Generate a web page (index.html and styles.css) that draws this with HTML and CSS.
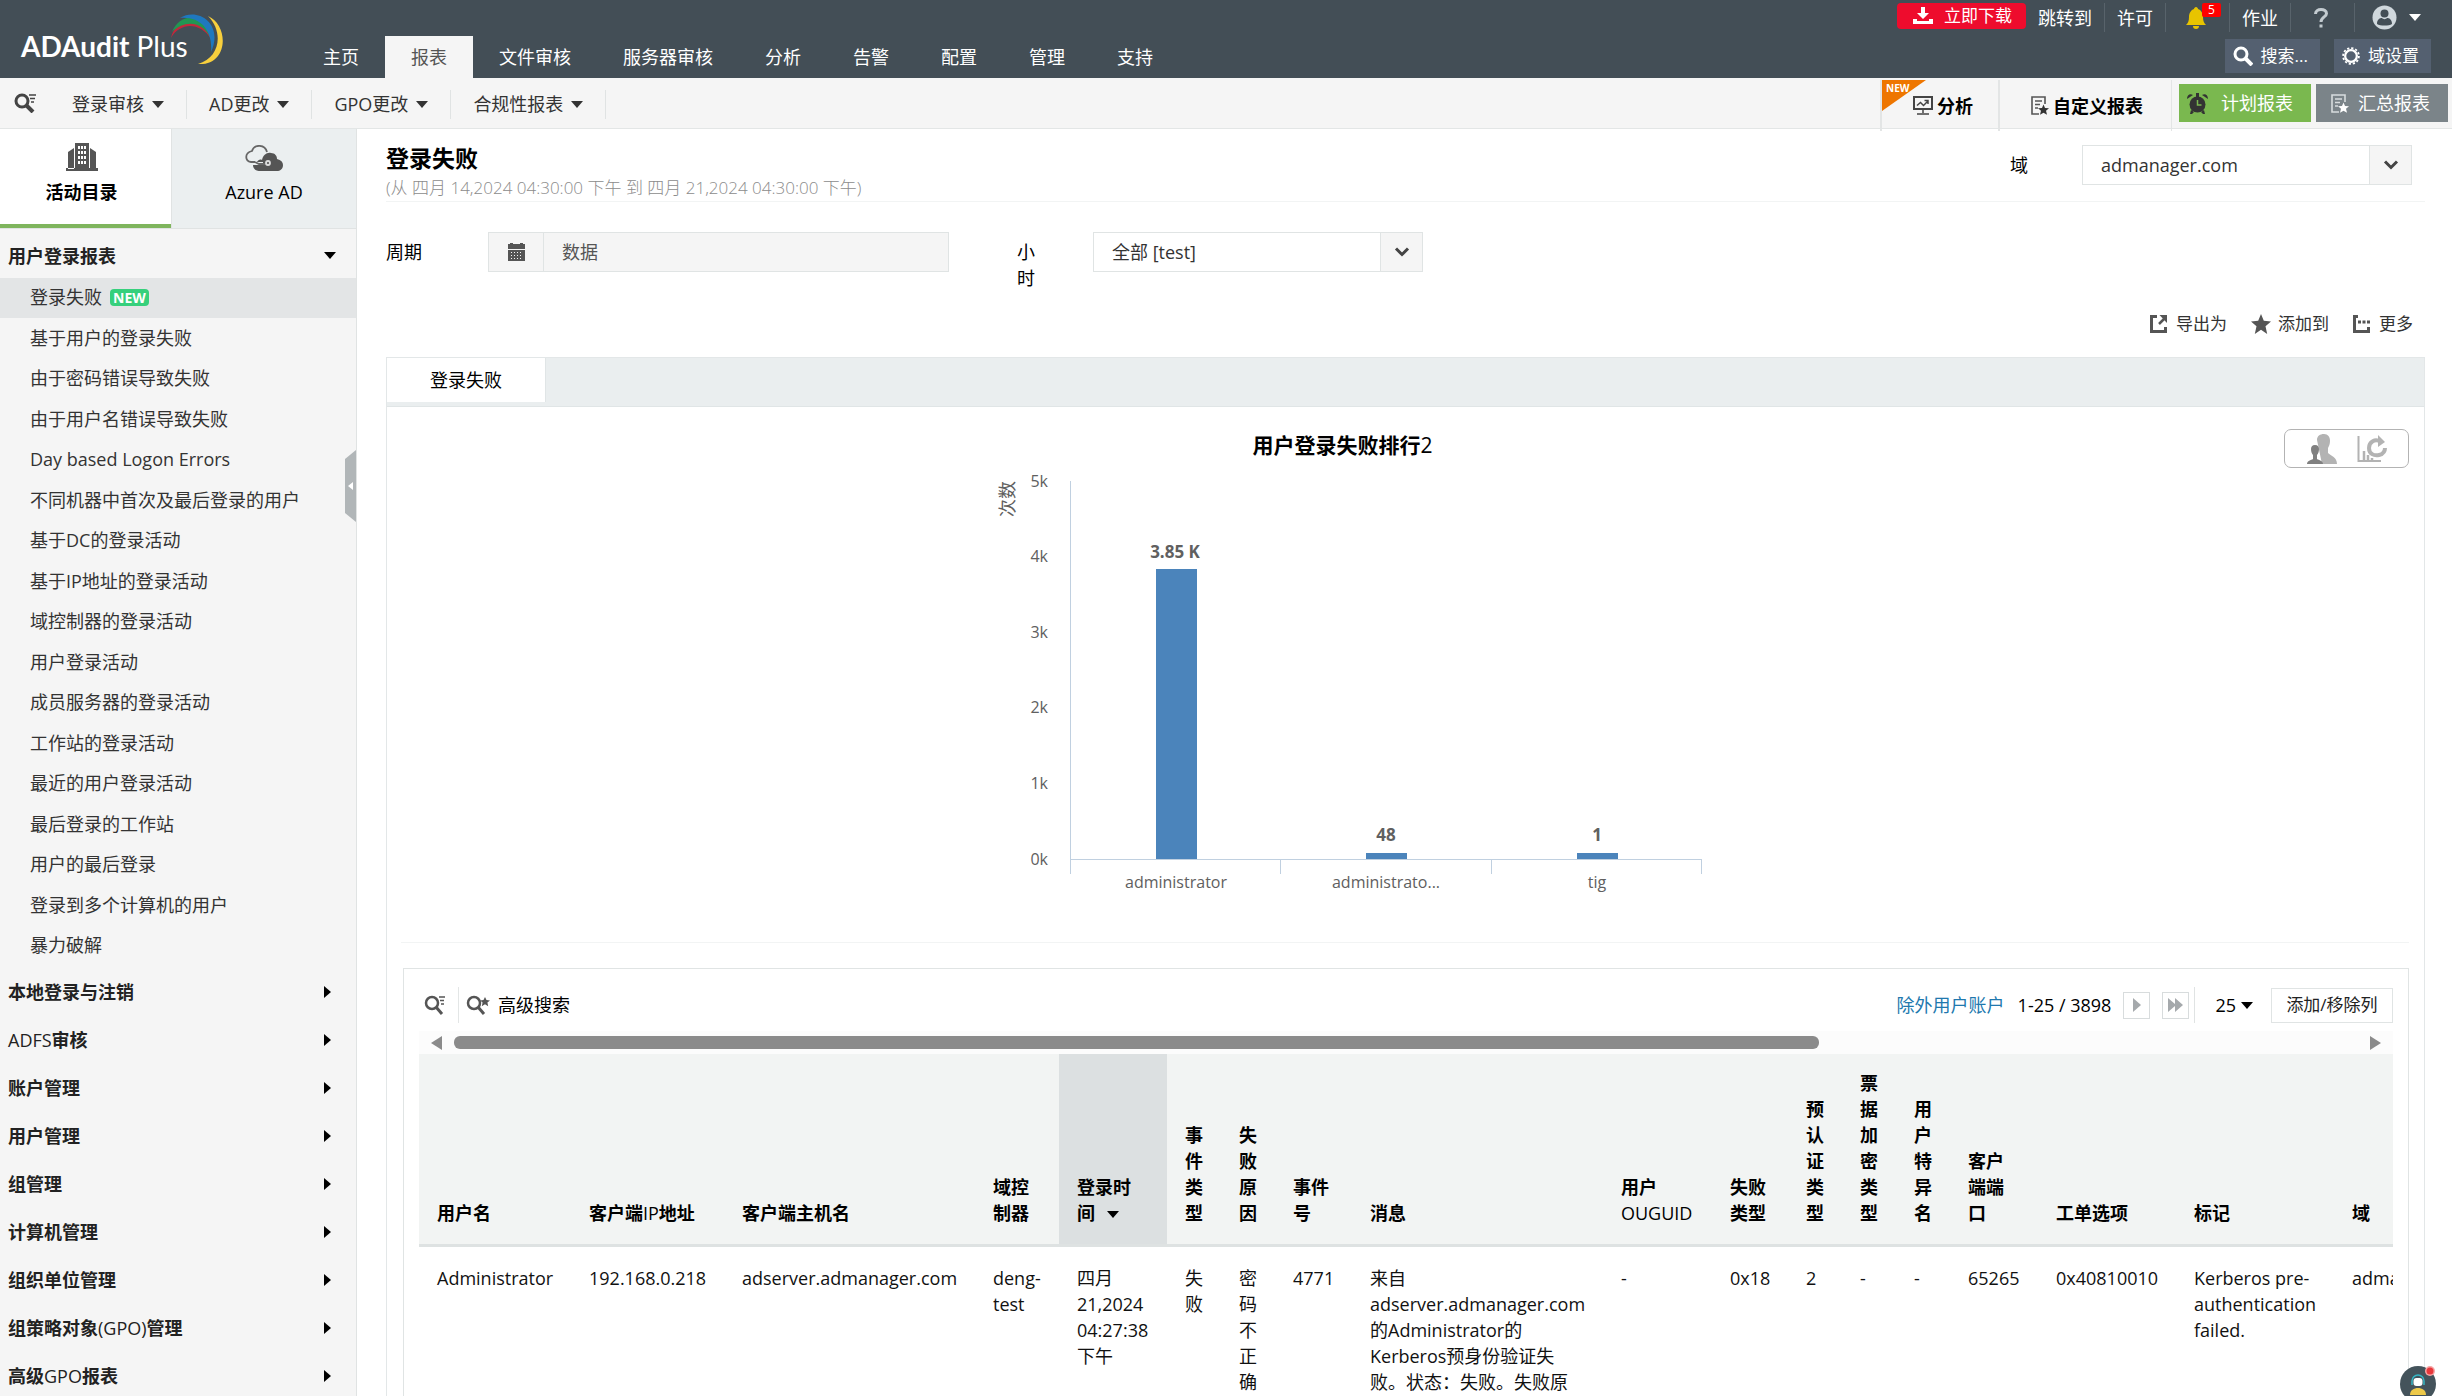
FILE: index.html
```html
<!DOCTYPE html>
<html lang="zh-CN">
<head>
<meta charset="utf-8">
<title>ADAudit Plus</title>
<link rel="stylesheet" href="styles.css">
</head>
<body>
<header class="header">
  <a class="logo" href="#"><span class="logo-text"><b>ADAudit</b> Plus</span>
    <svg class="logo-swoosh" width="56" height="54" viewBox="0 0 56 54">
      <path fill="#c0293c" d="M1 26C5 6 32 2 41 27C31 11 11 9 1 26Z"/>
      <path fill="#219653" d="M2 20C12-4 42 3 43 32C37 11 17 5 2 20Z"/>
      <path fill="#1f78bf" d="M10 6C28-5 54 12 41 40C43 18 30 4 10 6Z"/>
      <path fill="#f7cf3d" d="M38 4C60 14 58 54 28 52C50 46 54 20 38 4Z"/>
    </svg>
  </a>
  <nav class="main-nav">
    <a href="#">主页</a><a href="#" class="active">报表</a><a href="#">文件审核</a><a href="#">服务器审核</a><a href="#">分析</a><a href="#">告警</a><a href="#">配置</a><a href="#">管理</a><a href="#">支持</a>
  </nav>
  <div class="header-tools">
    <div class="tool-row top">
      <button class="download"><svg width="20" height="18" viewBox="0 0 20 18" fill="#fff"><path d="M8 0h4v6h4l-6 6-6-6h4zM0 12h4v2h12v-2h4v5H0z"/></svg>立即下载</button>
      <a href="#" class="top-item first">跳转到</a>
      <a href="#" class="top-item">许可</a>
      <a href="#" class="top-item icon-item"><svg width="20" height="22" viewBox="0 0 20 22" fill="#e8c400"><path d="M10 0c1 0 2 1 2 2 3 1 5 4 5 8 0 4 1 6 3 8H0c2-2 3-4 3-8 0-4 2-7 5-8 0-1 1-2 2-2zM7 19h6c0 2-1 3-3 3s-3-1-3-3z"/></svg><span class="badge">5</span></a>
      <a href="#" class="top-item">作业</a>
      <a href="#" class="top-item icon-item"><svg width="14" height="20" viewBox="0 0 14 20" fill="none" stroke="#c3cbd0" stroke-width="3"><path d="M1.500 6C1.500 3 4 1.500 7 1.500S12.500 3 12.500 5.500C12.500 9 7 9 7 14M7 16.500v3"/></svg></a>
      <a href="#" class="top-item user"><svg width="25" height="25" viewBox="0 0 25 25"><circle cx="12.500" cy="12.500" r="12" fill="#d0d8dd"/><circle cx="12.500" cy="8.500" r="4" fill="#434e56"/><path fill="#434e56" d="M5 19c0-5 3-6 5-6 1 1.500 4 1.500 5 0 2 0 5 1 5 6-3 2-12 2-15 0z"/></svg><span class="caret white"></span></a>
    </div>
    <div class="tool-row bottom">
      <button class="dark-btn"><svg width="20" height="20" viewBox="0 0 20 20" fill="none" stroke="#fff" stroke-width="3"><circle cx="8" cy="8" r="6"/><path d="M12 12l7 7" stroke-width="4"/></svg>搜索...</button>
      <button class="dark-btn"><svg width="18" height="18" viewBox="0 0 20 20" fill="none" stroke="#fff"><circle cx="10" cy="10" r="6.500" stroke-width="2.500"/><circle cx="10" cy="10" r="8.800" stroke-width="2" stroke-dasharray="2.500 2.100"/></svg>域设置</button>
    </div>
  </div>
</header>

<div class="subnav">
  <button class="icon-btn" aria-label="搜索"><svg width="22" height="20" viewBox="0 0 22 20" fill="none" stroke="#444"><circle cx="8" cy="8" r="6" stroke-width="3"/><path d="M12 12l7 7" stroke-width="4"/><path d="M15 2h7M16 5.500h5M17 9h3" stroke-width="1.500"/></svg></button>
  <nav class="sub-links">
    <a href="#">登录审核<span class="caret"></span></a><a href="#">AD更改<span class="caret"></span></a><a href="#">GPO更改<span class="caret"></span></a><a href="#">合规性报表<span class="caret"></span></a>
  </nav>
  <div class="sub-right">
    <a href="#" class="sub-link analysis"><svg class="ribbon" width="44" height="31" viewBox="0 0 44 31"><path d="M0 0h44L0 31z" fill="#ee7600"/><text x="4" y="12">NEW</text></svg><svg width="20" height="19" viewBox="0 0 20 19" fill="none" stroke="#444" stroke-width="2"><rect x="1" y="1" width="18" height="12"/><path d="M10 13v4M4 18h12M4 9.500l3.500-3 3 3L15 5M11.500 4.500H15V8" stroke-width="1.500"/></svg>分析</a>
    <a href="#" class="sub-link custom"><svg width="18" height="19" viewBox="0 0 18 19" fill="none" stroke="#555"><path d="M14 8V1H1v17h7" stroke-width="1.600"/><path d="M4 5h7M4 8.500h5M4 12h3" stroke-width="1.500"/><path fill="#333" stroke="none" d="M12.500 8.500l1.500 3.500 4 .3-3 2.500 1 4-3.500-2-3.500 2 1-4-3-2.500 4-.3z"/></svg>自定义报表</a>
    <button class="action green"><svg width="21" height="21" viewBox="0 0 21 21" fill="#333"><circle cx="10.500" cy="11.500" r="8"/><path d="M0 6C0 2 3 0 6 2zM21 6c0-4-3-6-6-4zM9 0h3v4H9zM4 17l3 2-2 2H3zM17 17l-3 2 2 2h2z"/><path d="M10.500 7v5h4" fill="none" stroke="#7ab84f" stroke-width="1.500"/></svg>计划报表</button>
    <button class="action grey"><svg width="18" height="19" viewBox="0 0 18 19" fill="none" stroke="#d8dcde"><path d="M14 8V1H1v17h7" stroke-width="1.600"/><path d="M4 5h7M4 8.500h5M4 12h3" stroke-width="1.500"/><path fill="#fff" stroke="none" d="M12.500 8.500l1.500 3.500 4 .3-3 2.500 1 4-3.500-2-3.500 2 1-4-3-2.500 4-.3z"/></svg>汇总报表</button>
  </div>
</div>

<div class="body">
  <aside class="sidebar">
    <div class="side-tabs">
      <a href="#" class="side-tab active"><svg width="32" height="28" viewBox="0 0 32 28" fill="#555"><path fill-rule="evenodd" d="M9 0h14v26H9zM12 3v3h2V3zm3 0v3h2V3zm3 0v3h2V3zm-6 5v3h2V8zm3 0v3h2V8zm3 0v3h2V8zm-6 5v3h2v-3zm3 0v3h2v-3zm3 0v3h2v-3zm-6 5v3h2v-3zm3 0v3h2v-3zm3 0v3h2v-3z"/><path d="M8 5L2 9v17h6zM24 5l6 4v17h-6zM0 25h32v3H0z"/></svg>活动目录</a>
      <a href="#" class="side-tab"><svg width="38" height="26" viewBox="0 0 38 26" fill="none" stroke="#666" stroke-width="1.800"><path fill="#555" stroke="none" d="M16 26c-5 0-8-2-8-6h10v-3h-6c1-2 3-3 5-2 1-5 5-8 9-7 4 0 6 3 6 6 4 1 6 3 6 6 0 4-3 6-6 6z"/><path d="M10 17H6c-6-1-7-9 1-11C9-1 20-1 22 7M10 17l4 2h8"/><circle cx="23" cy="18" r="2" stroke="#ddd"/></svg>Azure AD</a>
    </div>
    <nav class="side-nav">
      <h2 class="group open">用户登录报表<span class="caret"></span></h2>
      <ul>
        <li class="selected"><a href="#">登录失败</a><span class="new-tag">NEW</span></li>
        <li><a href="#">基于用户的登录失败</a></li>
        <li><a href="#">由于密码错误导致失败</a></li>
        <li><a href="#">由于用户名错误导致失败</a></li>
        <li><a href="#">Day based Logon Errors</a></li>
        <li><a href="#">不同机器中首次及最后登录的用户</a></li>
        <li><a href="#">基于DC的登录活动</a></li>
        <li><a href="#">基于IP地址的登录活动</a></li>
        <li><a href="#">域控制器的登录活动</a></li>
        <li><a href="#">用户登录活动</a></li>
        <li><a href="#">成员服务器的登录活动</a></li>
        <li><a href="#">工作站的登录活动</a></li>
        <li><a href="#">最近的用户登录活动</a></li>
        <li><a href="#">最后登录的工作站</a></li>
        <li><a href="#">用户的最后登录</a></li>
        <li><a href="#">登录到多个计算机的用户</a></li>
        <li><a href="#">暴力破解</a></li>
      </ul>
      <h2 class="group"><span>本地登录与注销</span><span class="caret-right"></span></h2>
      <h2 class="group"><span><span class="latin">ADFS</span>审核</span><span class="caret-right"></span></h2>
      <h2 class="group"><span>账户管理</span><span class="caret-right"></span></h2>
      <h2 class="group"><span>用户管理</span><span class="caret-right"></span></h2>
      <h2 class="group"><span>组管理</span><span class="caret-right"></span></h2>
      <h2 class="group"><span>计算机管理</span><span class="caret-right"></span></h2>
      <h2 class="group"><span>组织单位管理</span><span class="caret-right"></span></h2>
      <h2 class="group"><span>组策略对象<span class="latin">(GPO)</span>管理</span><span class="caret-right"></span></h2>
      <h2 class="group"><span>高级<span class="latin">GPO</span>报表</span><span class="caret-right"></span></h2>
    </nav>
    <button class="collapse" aria-label="收起"><svg width="11" height="72" viewBox="0 0 11 72"><path d="M11 0v72L0 63V9z" fill="#b1b6b8"/><path d="M8 32v8l-5-4z" fill="#fff"/></svg></button>
  </aside>

  <main class="main">
    <div class="title-row">
      <div>
        <h1>登录失败</h1>
        <p class="range">(从 四月 14,2024 04:30:00 下午 到 四月 21,2024 04:30:00 下午)</p>
      </div>
      <div class="domain-field">
        <label for="domain">域</label>
        <div class="select domain"><select id="domain"><option>admanager.com</option></select><span class="chev"><svg width="16" height="10" viewBox="0 0 16 10" fill="none" stroke="#444" stroke-width="3"><path d="M2 1.500l6 6 6-6"/></svg></span></div>
      </div>
    </div>

    <div class="filters">
      <label for="period" class="period-label">周期</label>
      <div class="period"><button aria-label="日历"><svg width="17" height="18" viewBox="0 0 17 18" fill="#555"><path d="M2 0h3v1h7V0h3v1h2v5H0V1h2z"/><path fill-rule="evenodd" d="M0 7h17v11H0zM3 9v1h1V9zm3 0v1h1V9zm3 0v1h1V9zm3 0v1h1V9zM3 12v1h1v-1zm3 0v1h1v-1zm3 0v1h1v-1zm3 0v1h1v-1zM3 15v1h1v-1zm3 0v1h1v-1zm3 0v1h1v-1zm3 0v1h1v-1z"/></svg></button><input id="period" type="text" value="数据"></div>
      <label for="hours" class="hours-label">小时</label>
      <div class="select hours"><select id="hours"><option>全部 [test]</option></select><span class="chev"><svg width="16" height="10" viewBox="0 0 16 10" fill="none" stroke="#444" stroke-width="3"><path d="M2 1.500l6 6 6-6"/></svg></span></div>
    </div>

    <div class="actions">
      <a href="#"><svg width="17" height="18" viewBox="0 0 17 18" fill="none" stroke="#555" stroke-width="3"><path d="M7 1.500H1.500v15h14V12"/><path d="M9 9l5-5" stroke-width="2.500"/><path d="M9.500 0H17v8z" fill="#555" stroke="none"/></svg>导出为</a>
      <a href="#" class="fav"><svg width="20" height="20" viewBox="0 0 20 20" fill="#555"><path d="M10 0l2.800 6.800 7.200.6-5.500 4.800L16.200 20 10 15.800 3.800 20l1.700-7.800L0 7.400l7.200-.6z"/></svg>添加到</a>
      <a href="#"><svg width="17" height="18" viewBox="0 0 17 18" fill="none" stroke="#555" stroke-width="3"><path d="M5 1.500H1.500v15h14V12"/><path d="M5 7h12" stroke-dasharray="3 1.500"/></svg>更多</a>
    </div>

    <section class="report">
      <div class="tabs"><button class="tab">登录失败</button></div>
      <div class="chart-panel">
        <div class="chart">
          <h3>用户登录失败排行<span class="latin">2</span></h3>
          <svg width="720" height="430" viewBox="983 470 720 430" role="img" aria-label="用户登录失败排行2">
            <g class="axis"><path d="M1070.500 481v393M1070 859.500h631M1280.500 859v15M1491.500 859v15M1701.500 859v15"/></g>
            <g fill="#4b84bb"><path d="M1156 569h41v290h-41zM1366 853h41v6h-41zM1577 853h41v6h-41z"/></g>
            <g class="ticks">
              <text x="1048" y="487">5k</text><text x="1048" y="562">4k</text><text x="1048" y="638">3k</text><text x="1048" y="713">2k</text><text x="1048" y="789">1k</text><text x="1048" y="865">0k</text>
            </g>
            <g class="values"><text x="1175" y="558">3.85 K</text><text x="1386" y="841">48</text><text x="1597" y="841">1</text></g>
            <g class="cats"><text x="1176" y="888">administrator</text><text x="1386" y="888">administrato...</text><text x="1597" y="888">tig</text></g>
            <text class="ylabel" transform="translate(1014 499) rotate(-90)">次数</text>
          </svg>
        </div>
        <div class="chart-tools">
          <button aria-label="用户"><svg width="30" height="30" viewBox="0 0 30 30"><path fill="#b3b3b3" d="M10 6c0-4 3-6 7-6s6 3 6 7c0 3-1 5-2 7v5c3 3 9 4 9 11H15z"/><path fill="#808080" d="M4 15c0-2 1-4 4-4s4 2 4 4c0 3-1 5-2 6v4c2 1 6 2 6 5H0c0-3 4-4 6-5v-4c-1-1-2-3-2-6z"/></svg></button>
          <button aria-label="刷新图表"><svg width="30" height="27" viewBox="0 0 30 27" fill="none" stroke="#b3b3b3"><path d="M1.500 1v25H24" stroke-width="2"/><path d="M7 16v10M11 20v6M15 23v3" stroke-width="2.500"/><path d="M24 7c-6-4-12 0-12 6s5 8 10 7 6-5 6-7" stroke-width="4"/><path d="M21 0l7 7-7 5z" fill="#b3b3b3" stroke="none"/></svg></button>
        </div>
      </div>

      <div class="table-panel">
        <div class="table-bar">
          <button class="icon-btn" aria-label="搜索"><svg width="22" height="20" viewBox="0 0 22 20" fill="none" stroke="#555"><circle cx="8" cy="8" r="6" stroke-width="2.500"/><path d="M12 12l6 7" stroke-width="3"/><path d="M15 2h6M16 5.500h4M17 9h3" stroke-width="1.500"/></svg></button>
          <a href="#" class="adv"><svg width="24" height="20" viewBox="0 0 24 20" fill="none" stroke="#555"><circle cx="8" cy="8" r="6" stroke-width="2.500"/><path d="M12 12l6 7" stroke-width="3"/><path fill="#555" stroke="none" d="M19 2l1.500 3 3.500.4-2.600 2.200.8 3.600-3.200-1.900-3.200 1.900.8-3.600L14 5.400l3.500-.4z"/></svg>高级搜索</a>
          <div class="pager">
            <a href="#" class="exclude">除外用户账户</a>
            <span class="count">1-25 / 3898</span>
            <button class="page-btn" aria-label="下一页"><svg width="8" height="14" viewBox="0 0 8 14"><path d="M0 0l8 7-8 7z" fill="#a5a9ac"/></svg></button>
            <button class="page-btn last" aria-label="末页"><svg width="15" height="14" viewBox="0 0 15 14"><path d="M0 0l7 6V0l8 7-8 7V8l-7 6z" fill="#a5a9ac"/></svg></button>
            <button class="size">25<span class="caret"></span></button>
            <button class="columns">添加/移除列</button>
          </div>
        </div>
        <div class="hscroll"><span class="arrow left"></span><div class="track"><div class="thumb"></div></div><span class="arrow right"></span></div>
        <div class="table-wrap">
          <table>
            <colgroup><col class="w152"><col class="w153"><col class="w251"><col class="w84"><col class="w108"><col class="w54"><col class="w54"><col class="w77"><col class="w251"><col class="w109"><col class="w76"><col class="w54"><col class="w54"><col class="w54"><col class="w88"><col class="w138"><col class="w158"><col class="w180"></colgroup>
            <thead><tr>
              <th>用户名</th><th>客户端<span class="latin">IP</span>地址</th><th>客户端主机名</th><th>域控制器</th><th class="sorted">登录时<br>间<span class="caret"></span></th><th>事件类型</th><th>失败原因</th><th>事件号</th><th>消息</th><th>用户<br><span class="latin">OUGUID</span></th><th>失败<br>类型</th><th>预认证类型</th><th>票据加密类型</th><th>用户特异名</th><th>客户<br>端端<br>口</th><th>工单选项</th><th>标记</th><th>域</th>
            </tr></thead>
            <tbody><tr>
              <td>Administrator</td><td>192.168.0.218</td><td>adserver.admanager.com</td><td>deng-test</td><td>四月 21,2024<br>04:27:38<br>下午</td><td>失败</td><td>密码不正确</td><td>4771</td><td>来自<br>adserver.admanager.com<br>的Administrator的<br>Kerberos预身份验证失<br>败。状态：失败。失败原</td><td>-</td><td>0x18</td><td>2</td><td>-</td><td>-</td><td>65265</td><td>0x40810010</td><td>Kerberos pre-authentication failed.</td><td>admanager.com</td>
            </tr></tbody>
          </table>
        </div>
      </div>
    </section>
  </main>
</div>

<button class="assistant" aria-label="在线客服"><svg width="40" height="36" viewBox="0 0 40 36"><circle cx="18" cy="18" r="18" fill="#44535b"/><path d="M12 19v-4a6 6 0 0112 0v4" fill="none" stroke="#35b6c4" stroke-width="1.500"/><rect x="13.500" y="12" width="9" height="8" rx="3" fill="#fff"/><path d="M10 29c0-5 4-7 8-7s8 2 8 7z" fill="#edc94a"/><circle cx="30" cy="5" r="5" fill="#f6a5a5"/><circle cx="30" cy="5" r="3.500" fill="#e8383b"/></svg></button>
</body>
</html>
```

FILE: styles.css
```css
* { box-sizing: border-box; }
body {
  margin: 0;
  height: 100vh;
  overflow: hidden;
  display: flex;
  flex-direction: column;
  font: 18px/26px "Open Sans", "Noto Sans CJK SC", sans-serif;
  color: #000;
  background: #fff;
}
a { color: inherit; text-decoration: none; }
button, input, select { font: inherit; color: inherit; border: 0; background: none; padding: 0; border-radius: 0; }
h1, h2, h3, p, ul { margin: 0; padding: 0; }
svg { display: block; flex: none; }
ul { list-style: none; }
.caret { display: inline-block; flex: none; border: 6px solid transparent; border-top: 7px solid currentColor; border-bottom: 0; }
.caret-right { border: 6px solid transparent; border-left: 7px solid currentColor; border-right: 0; }

/* header */
.header { flex: none; height: 78px; display: flex; background: #434e56; color: #fff; }
.logo { position: relative; flex: none; width: 297px; padding: 26px 0 0 21px; font: 28px/40px Lato, sans-serif; }
.logo-text { white-space: nowrap; }
.logo-swoosh { position: absolute; left: 170px; top: 12px; }
.main-nav { display: flex; align-items: flex-end; flex: 1; }
.main-nav a { height: 42px; padding: 8px 26px; white-space: nowrap; }
.main-nav .active { background: #f5f5f5; color: #555; }
.header-tools { display: flex; flex-direction: column; gap: 7px; align-items: flex-end; }
.tool-row { display: flex; }
.top { padding: 3px 31px 0 0; }
.download { display: flex; align-items: center; gap: 11px; height: 26px; width: 129px; padding-left: 16px; border-radius: 4px; background: #ee0c2d; font-size: 17px; }
.top-item { display: flex; align-items: center; justify-content: center; height: 29px; padding: 0 12px; border-left: 1px solid #58636b; }
.top-item.first { border: 0; }
.icon-item { width: 64px; position: relative; padding: 0 15px 0 12px; }
.badge { position: absolute; left: 36px; top: 0; width: 19px; height: 14px; background: #f00; font-size: 12px; line-height: 14px; text-align: center; border-radius: 2px; }
.user { gap: 12px; padding: 0 0 0 17px; }
.bottom { gap: 14px; padding-right: 21px; }
.dark-btn { display: flex; align-items: center; gap: 8px; height: 34px; padding: 0 12px 0 8px; background: #546070; font-size: 17px; }

/* sub navigation */
.subnav { flex: none; height: 51px; display: flex; background: #f5f5f5; border-bottom: 1px solid #e3e6e6; color: #333; }
.subnav .icon-btn { width: 50px; padding-left: 14px; }
.sub-links { display: flex; align-items: center; flex: 1; padding-top: 2px; }
.sub-links a { display: flex; align-items: center; gap: 8px; height: 29px; padding: 0 22px; border-right: 1px solid #e0e3e3; }
.sub-right { display: flex; color: #000; }
.sub-link { position: relative; display: flex; align-items: center; gap: 4px; height: 51px; margin-top: 2px; padding: 0 25px 0 31px; border-left: 2px solid #e3e5e5; font-weight: 700; }
.custom { padding: 0 28px 0 31px; border-right: 1px solid #e3e5e5; }
.ribbon { position: absolute; left: 0; top: 0; }
.ribbon text { font: 700 10px "Open Sans", sans-serif; fill: #fff; }
.action { display: flex; align-items: center; height: 38px; width: 132px; margin: 6px 5px 0 0; color: #fff; }
.green { margin-left: 7px; gap: 13px; padding-left: 8px; background: #7ab84f; }
.grey { margin-right: 4px; gap: 9px; padding-left: 15px; background: #7b8489; }

/* sidebar */
.body { flex: 1; min-height: 0; display: flex; }
.sidebar { position: relative; flex: none; width: 357px; background: #f5f5f5; border-right: 1px solid #e0e3e3; }
.side-tabs { display: flex; height: 100px; border-bottom: 1px solid #e0e3e3; }
.side-tab { display: flex; flex-direction: column; align-items: center; justify-content: flex-end; gap: 8px; flex: 1; padding: 0 20px 23px; background: #ebeff0; border-left: 1px solid #e0e3e3; }
.side-tab.active { flex: none; width: 171px; padding: 0 15px 19px 7px; border: 0; border-bottom: 4px solid #7fb55d; background: #fff; font-weight: 700; }
.group { display: flex; align-items: center; justify-content: space-between; height: 48px; padding: 0 25px 0 8px; font-size: 18px; color: #222; }
.group.open { height: 49px; padding: 4px 20px 0 8px; }
.group .caret, .group .caret-right { color: #000; }
.side-nav ul { padding-bottom: 2px; }
.side-nav li { display: flex; align-items: center; gap: 8px; height: 40px; padding: 0 0 2px 30px; color: #333; }
.side-nav li:nth-child(even) { height: 41px; }
.side-nav .selected { background: #e3e5e6; }
.new-tag { height: 17px; padding: 0 3px; border-radius: 4px; background: #36d07c; color: #fff; font-size: 14px; line-height: 17px; font-weight: 700; }
.collapse { position: absolute; right: 0; top: 321px; }

/* main column */
.main { flex: 1; min-width: 0; display: flex; flex-direction: column; padding: 0 27px 0 29px; }
.title-row { display: flex; justify-content: space-between; height: 78px; padding: 15px 13px 0 0; border-bottom: 1px solid #f2f4f4; }
h1 { font-size: 23px; line-height: 28px; }
.range { margin-top: 3px; font-size: 17px; font-weight: 300; color: #8c8c8c; }
.domain-field { display: flex; align-items: center; gap: 54px; height: 42px; }
.select { display: flex; height: 40px; border: 1px solid #e0e4e4; background: #fff; color: #333; }
.select select { flex: 1; appearance: none; padding-left: 18px; }
.chev { display: flex; align-items: center; justify-content: center; width: 42px; background: #f5f5f5; border-left: 1px solid #e0e4e4; }
.domain { width: 330px; }
.filters { display: flex; padding-top: 26px; margin-top: 4px; }
.filters label { padding-top: 7px; }
.period-label { width: 102px; }
.period { display: flex; width: 461px; height: 40px; border: 1px solid #e0e4e4; background: #f5f5f5; color: #555; }
.period button { display: flex; align-items: center; justify-content: center; width: 55px; border-right: 1px solid #e0e4e4; }
.period input { flex: 1; min-width: 0; padding-left: 18px; }
.hours-label { width: 18px; margin: 0 58px 0 68px; }
.hours { width: 330px; }
.actions { display: flex; justify-content: flex-end; padding: 20px 12px 20px 0; font-size: 17px; color: #333; }
.actions a { display: flex; align-items: center; gap: 9px; margin-left: 24px; }
.actions .fav { gap: 7px; }

/* report */
.report { flex: 1; display: flex; flex-direction: column; border: 1px solid #e3e7e8; border-bottom: 0; }
.tabs { height: 49px; background: #eaeeef; border-bottom: 1px solid #e0e5e6; }
.tab { width: 159px; height: 44px; background: #fff; border-right: 1px solid #e0e5e6; }
.chart-panel { display: flex; align-items: flex-start; margin: 0 15px 0 14px; padding-top: 22px; height: 536px; border-bottom: 1px solid #f2f4f4; }
.chart { flex: 1; display: flex; flex-direction: column; align-items: center; }
.chart h3 { font-size: 21px; line-height: 32px; margin-bottom: 9px; }
.latin { font-weight: 500; }
.axis { fill: none; stroke: #c0d0e0; stroke-width: 1; }
.chart text { font-family: "Open Sans", "Noto Sans CJK SC", sans-serif; font-size: 16px; fill: #606060; text-anchor: middle; }
.chart .ticks text { text-anchor: end; }
.chart .values text { font-size: 17px; font-weight: 700; }
.chart text.ylabel { font-size: 18px; }
.chart-tools { display: flex; align-items: center; justify-content: center; gap: 20px; width: 125px; height: 39px; border: 1px solid #b3b3b3; border-radius: 7px; }

.table-panel { flex: 1; margin: 25px 15px 0 16px; padding: 0 15px; border: 1px solid #e0e4e4; border-bottom: 0; }
.table-bar { display: flex; align-items: center; height: 62px; padding-top: 10px; }
.table-bar .icon-btn { display: flex; align-items: center; width: 40px; height: 36px; padding-left: 5px; border-right: 1px solid #e3e6e6; }
.adv { display: flex; align-items: center; gap: 8px; margin-left: 7px; }
.pager { display: flex; align-items: center; margin-left: auto; }
.exclude { color: #2178ae; }
.count { margin: 0 12px 0 13px; }
.page-btn { display: flex; align-items: center; justify-content: center; width: 27px; height: 27px; margin-right: 12px; border: 1px solid #d8dcdd; }
.page-btn.last { margin-right: 5px; }
.size { display: flex; align-items: center; gap: 5px; height: 36px; padding: 0 18px 0 20px; border-left: 1px solid #e0e3e3; }
.columns { width: 122px; height: 35px; border: 1px solid #e0e4e4; font-size: 17px; color: #222; }
.hscroll { display: flex; align-items: center; height: 23px; padding: 0 12px; background: #fcfcfc; }
.arrow { border: 7px solid transparent; }
.arrow.left { border-left: 0; border-right: 11px solid #8b8b8b; }
.arrow.right { border-right: 0; border-left: 11px solid #8b8b8b; }
.track { flex: 1; margin: 0 20px 0 12px; }
.thumb { width: 72%; height: 13px; border-radius: 6px; background: #8b8b8b; }
.table-wrap { overflow: hidden; }
table { width: 1989px; table-layout: fixed; border-collapse: collapse; }
th, td { padding: 18px; text-align: left; }
th { padding-top: 16px; vertical-align: bottom; background: #f2f4f3; border-bottom: 3px solid #dee2e2; word-break: break-all; }
td { vertical-align: top; color: #111; }
td:nth-child(9), td:nth-child(3) { padding-right: 0; }
.sorted { background: #dce0e1; }
.sorted .caret { margin-left: 12px; vertical-align: 2px; }
.w54 { width: 54px; }
.w76 { width: 76px; }
.w77 { width: 77px; }
.w84 { width: 84px; }
.w88 { width: 88px; }
.w108 { width: 108px; }
.w109 { width: 109px; }
.w138 { width: 138px; }
.w152 { width: 152px; }
.w153 { width: 153px; }
.w158 { width: 158px; }
.w180 { width: 180px; }
.w251 { width: 251px; }

.assistant { position: fixed; right: 12px; bottom: -6px; }
```
